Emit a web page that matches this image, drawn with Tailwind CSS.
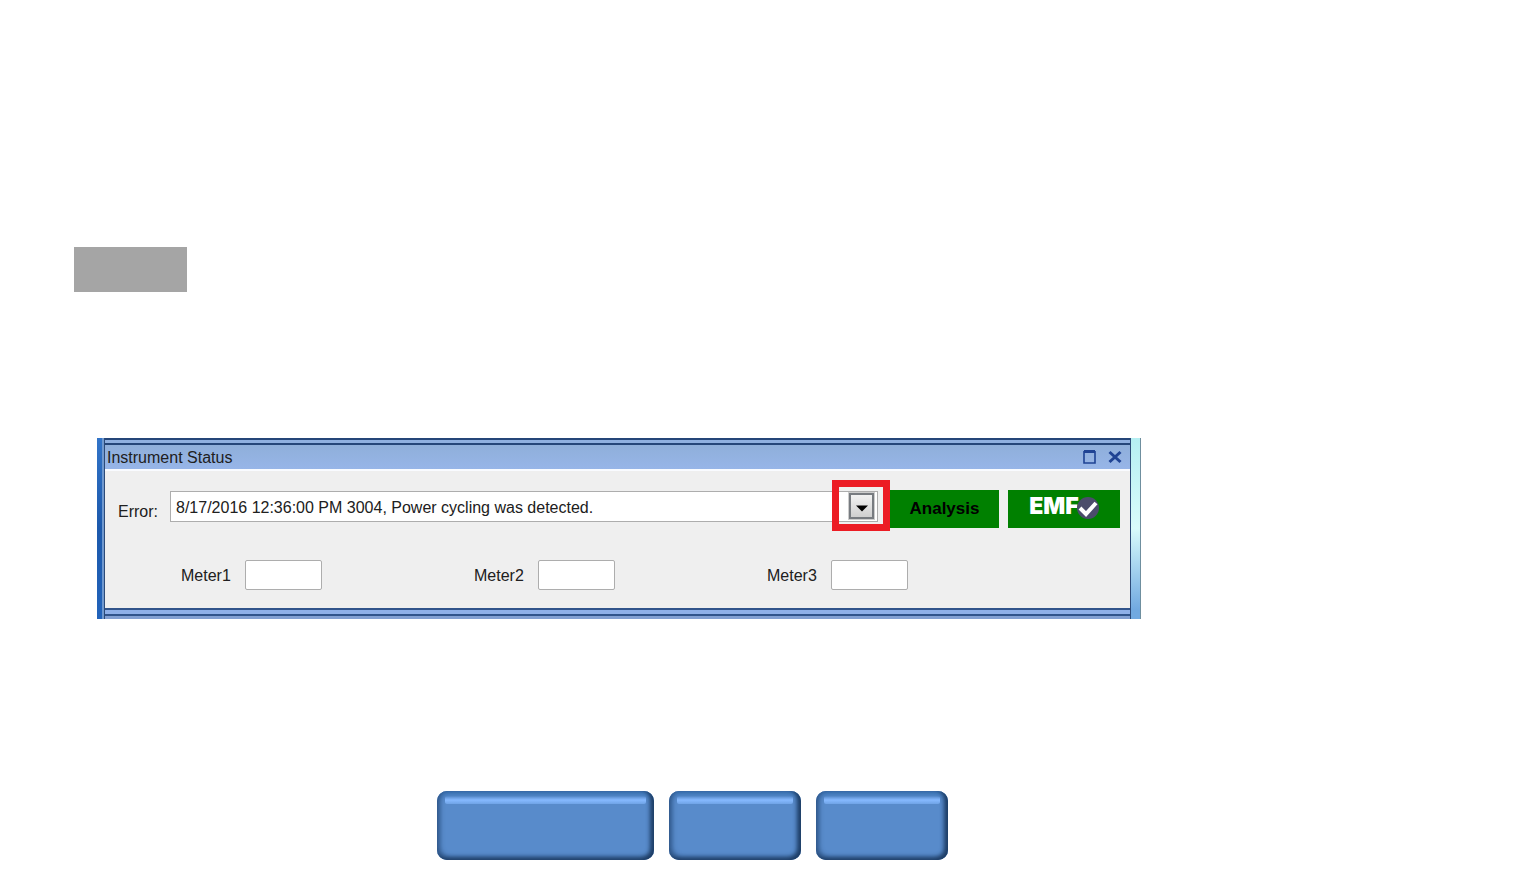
<!DOCTYPE html>
<html lang="en">
<head>
  <meta charset="UTF-8">
  <meta name="viewport" content="width=device-width, initial-scale=1.0">
  <title>Instrument Status</title>
  <script src="https://cdn.jsdelivr.net/npm/@tailwindcss/browser@4"></script>
</head>
<body class="bg-white text-[#202020] text-base font-['Liberation_Sans',Arial,sans-serif]">
  <div class="pt-[247px] pl-[74px]">
    <div class="w-[113px] h-[45px] bg-[#a5a5a5]"></div>
  </div>

  <!-- Instrument status window -->
  <main class="mt-[146px] ml-[97px] mr-[390px] flex">
    <div class="w-[5px] bg-linear-to-b from-[#3274c8] via-[#1c59ac] to-[#2263ba]"></div>
    <div class="w-[2px] bg-[#7099cf]"></div>

    <section class="flex-1 border-x border-[#2c4a78]">
      <div class="h-[7px] border-y-2 border-[#254679] bg-[#8fb0e0]"></div>
      <header class="h-[24px] flex items-center justify-between pl-[2px] pr-2 bg-linear-to-b from-[#8fafda] to-[#97b5e8]">
        <h1 class="pt-[2px]">Instrument Status</h1>
        <div class="flex items-center gap-3">
          <button type="button" aria-label="Maximize">
            <svg width="13" height="14" viewBox="0 0 13 14" fill="none" stroke="#1f4394"><path d="M1 1.5h11" stroke-width="3"/><path d="M1 1v12h11V1" stroke-width="1.6"/></svg>
          </button>
          <button type="button" aria-label="Close">
            <svg width="14" height="14" viewBox="0 0 14 14" fill="none" stroke="#1f4394" stroke-width="3"><path d="M1.5 2l11 10M12.5 2l-11 10"/></svg>
          </button>
        </div>
      </header>

      <div class="border-t-2 border-[#f9fbff] bg-[#efefef] pt-[19px] pb-[18px]">
        <div class="flex items-start pl-[13px] pr-[10px]">
          <label for="error" class="w-[52px] h-[38px] pt-[10px]">Error:</label>
          <div class="relative flex-1 pt-px">
            <select id="error" class="block w-full h-[31px] appearance-none border border-[#adadad] bg-white pt-[2px] pl-[5px] pr-10">
              <option>8/17/2016 12:36:00 PM 3004, Power cycling was detected.</option>
            </select>
            <span class="pointer-events-none absolute right-1 top-[3px] w-[25px] h-[26px] flex items-center justify-center border-2 border-[#777b80] bg-linear-to-b from-[#f2f2f2] to-[#cfcfcf] ring-1 ring-[#cccccc]">
              <svg class="mt-1" width="12" height="7" viewBox="0 0 12 7"><path d="M0 0.5h12l-6 6z" fill="#000"/></svg>
            </span>
            <span class="pointer-events-none absolute -right-3 -top-[10px] w-[58px] h-[51px] border-7 border-[#ec1c24]"></span>
          </div>
          <button type="button" class="ml-3 w-[109px] h-[38px] bg-[#008000] text-[17px] font-bold text-black">Analysis</button>
          <button type="button" class="ml-[9px] w-[112px] h-[38px] flex justify-center bg-[#008000] font-[Inter,sans-serif] text-[23px] leading-8 font-black text-white">
            EMF
            <svg class="-ml-[2px] mt-[6px]" width="22" height="24" viewBox="0 0 22 24"><circle cx="11" cy="12" r="11" fill="#4b4c6b"/><path d="M3 12l6 6 10-11" fill="none" stroke="#fff" stroke-width="4"/></svg>
          </button>
        </div>

        <div class="mt-8 pl-[76px] flex gap-[152px]">
          <div class="flex items-center w-[141px] justify-between">
            <label for="meter1" class="pt-[2px]">Meter1</label>
            <input id="meter1" type="text" class="w-[77px] h-[30px] px-1 border border-[#adadad] rounded-xs bg-white">
          </div>
          <div class="flex items-center w-[141px] justify-between">
            <label for="meter2" class="pt-[2px]">Meter2</label>
            <input id="meter2" type="text" class="w-[77px] h-[30px] px-1 border border-[#adadad] rounded-xs bg-white">
          </div>
          <div class="flex items-center w-[141px] justify-between">
            <label for="meter3" class="pt-[2px]">Meter3</label>
            <input id="meter3" type="text" class="w-[77px] h-[30px] px-1 border border-[#adadad] rounded-xs bg-white">
          </div>
        </div>
      </div>

      <div class="h-[8px] border-y-2 border-[#31548b] bg-[#8fb0e8]"></div>
      <div class="h-[3px] bg-[#83a0d2]"></div>
    </section>

    <div class="w-[10px] border-r border-[#6f8f9f] bg-linear-to-b from-[#b5eff2] from-0% via-[#d9fcfb] via-50% to-[#71a9e0] to-95%"></div>
  </main>

  <!-- Bottom buttons -->
  <nav class="mt-[172px] ml-[437px] flex gap-[15px]">
    <button type="button" aria-label="Back to contents" class="w-[217px] h-[69px] flex items-start rounded-[10px] px-2 pt-[5px] bg-[#588bcb] shadow-[inset_-4px_-2px_4px_#1e3e66,inset_3px_-3px_5px_#31588a,inset_0_4px_4px_#3d74b5]">
      <span class="flex-1 h-2 rounded-xs bg-linear-to-b from-[#588bcb]/0 via-[#86b9ff] to-[#6fa3e6]"></span>
    </button>
    <button type="button" aria-label="Previous" class="w-[132px] h-[69px] flex items-start rounded-[10px] px-2 pt-[5px] bg-[#588bcb] shadow-[inset_-4px_-2px_4px_#1e3e66,inset_3px_-3px_5px_#31588a,inset_0_4px_4px_#3d74b5]">
      <span class="flex-1 h-2 rounded-xs bg-linear-to-b from-[#588bcb]/0 via-[#86b9ff] to-[#6fa3e6]"></span>
    </button>
    <button type="button" aria-label="Next" class="w-[132px] h-[69px] flex items-start rounded-[10px] px-2 pt-[5px] bg-[#588bcb] shadow-[inset_-4px_-2px_4px_#1e3e66,inset_3px_-3px_5px_#31588a,inset_0_4px_4px_#3d74b5]">
      <span class="flex-1 h-2 rounded-xs bg-linear-to-b from-[#588bcb]/0 via-[#86b9ff] to-[#6fa3e6]"></span>
    </button>
  </nav>
</body>
</html>
